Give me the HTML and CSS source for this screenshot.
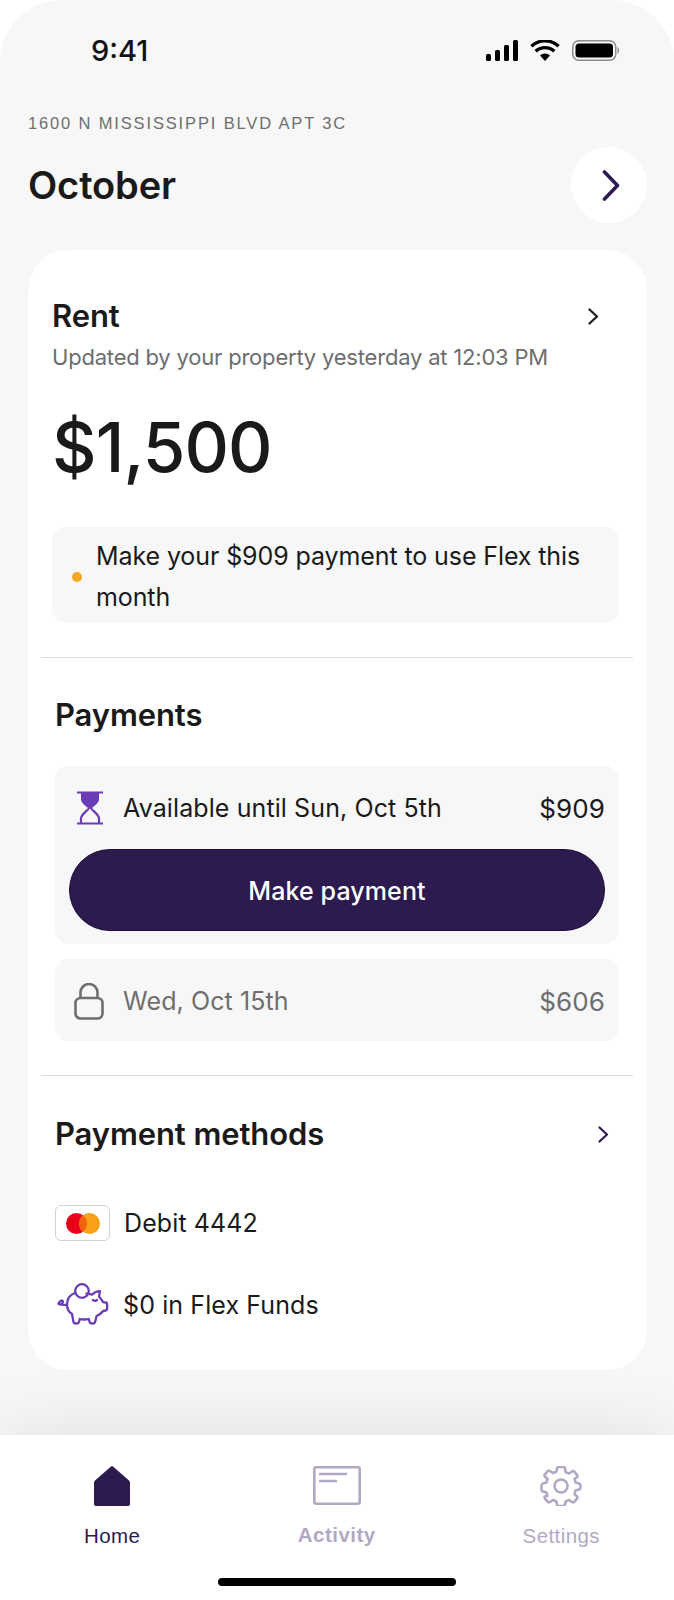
FILE: index.html
```html
<!DOCTYPE html>
<html lang="en">
<head>
<meta charset="utf-8">
<title>Home</title>
<link rel="stylesheet" href="styles.css">
</head>
<body>
<div class="phone">
  <div class="status">
    <span class="time">9:41</span>
    <div class="status-icons">
      <svg width="32" height="21" viewBox="0 0 32 21"><rect x="0" y="14" width="5" height="7" rx="1.5"/><rect x="9" y="10" width="5" height="11" rx="1.5"/><rect x="18" y="5" width="5" height="16" rx="1.5"/><rect x="27" y="0" width="5" height="21" rx="1.5"/></svg>
      <svg width="30" height="21" viewBox="0 0 30 21"><path d="M15 21l-5-5.600a7.400 7.400 0 0 1 10 0z"/><path d="M5.700 11.300a13.600 13.600 0 0 1 18.600 0" fill="none" stroke="#000" stroke-width="3.400"/><path d="M1.400 6.200a20 20 0 0 1 27.200 0" fill="none" stroke="#000" stroke-width="3.400"/></svg>
      <svg width="47" height="21" viewBox="0 0 47 21"><rect x=".75" y=".75" width="43" height="19.500" rx="6" fill="none" stroke="#8d8d8d" stroke-width="1.500"/><rect x="3.500" y="3.500" width="37.500" height="14" rx="3.500"/><path d="M45.500 7v7c1-.4 1.500-2 1.500-3.500s-.5-3.100-1.500-3.500z" fill="#8d8d8d"/></svg>
    </div>
  </div>

  <main class="content">
    <p class="address">1600 N MISSISSIPPI BLVD APT 3C</p>
    <div class="month-row">
      <h1 class="month">October</h1>
      <button class="round-btn" aria-label="Next month">
        <svg width="18" height="31" viewBox="0 0 18 31"><path d="M2.500 2l13 13.500-13 13.500" fill="none" stroke="#2d1a4f" stroke-width="3.600" stroke-linecap="round" stroke-linejoin="round"/></svg>
      </button>
    </div>

    <section class="card">
      <div class="rent">
        <div class="title-row">
          <h2 class="rent-title">Rent</h2>
          <svg class="chev-rent" width="11" height="17" viewBox="0 0 11 17"><path d="M1.500 1.500l7.500 7-7.500 7" fill="none" stroke="#1a1a1a" stroke-width="2.200" stroke-linecap="round" stroke-linejoin="round"/></svg>
        </div>
        <p class="updated">Updated by your property yesterday at 12:03 PM</p>
        <p class="amount">$1,500</p>
        <div class="note">
          <span class="dot"></span>
          <p class="note-text">Make your $909 payment to use Flex this month</p>
        </div>
      </div>

      <hr class="rule">

      <div class="payments">
        <h2 class="section-title">Payments</h2>
        <div class="pay-box active">
          <div class="pay-row">
            <svg class="pay-icon" width="28" height="34" viewBox="0 0 28 34"><g fill="none" stroke="#6a3cb5" stroke-width="2.200"><path d="M1 1.500h26M1 32.500h26"/><path d="M5 32v-4.500c0-3.500 4-6 7.500-9.500M23 32v-4.500c0-3.500-4-6-7.500-9.500"/></g><path d="M5 2h18v6.500c0 3-4 6-7 8.500v1h-4v-1c-3-2.500-7-5.500-7-8.500z" fill="#6a3cb5"/></svg>
            <span class="pay-label">Available until Sun, Oct 5th</span>
            <span class="pay-amt">$909</span>
          </div>
          <button class="pay-btn">Make payment</button>
        </div>
        <div class="pay-box locked">
          <div class="pay-row">
            <svg class="pay-icon" width="30" height="37" viewBox="0 0 30 37"><g fill="none" stroke="#6e6e6e" stroke-width="2.600"><rect x="1.500" y="15" width="27" height="20.500" rx="5"/><path d="M6.500 15V9.500a8.500 8.500 0 0 1 17 0V15"/></g></svg>
            <span class="pay-label">Wed, Oct 15th</span>
            <span class="pay-amt">$606</span>
          </div>
        </div>
      </div>

      <hr class="rule">

      <div class="methods">
        <div class="title-row">
          <h2 class="section-title">Payment methods</h2>
          <svg class="chev-methods" width="11" height="17" viewBox="0 0 11 17"><path d="M1.500 1.500l7.500 7-7.500 7" fill="none" stroke="#2d1a4f" stroke-width="2.200" stroke-linecap="round" stroke-linejoin="round"/></svg>
        </div>
        <div class="method">
          <span class="card-chip">
            <svg width="34" height="21" viewBox="0 0 34 21"><circle cx="10.500" cy="10.500" r="10.500" fill="#eb001b"/><circle cx="23.500" cy="10.500" r="10.500" fill="#f9a01b"/><path d="M17 2.300a10.500 10.500 0 0 1 0 16.400 10.500 10.500 0 0 1 0-16.400z" fill="#f4620f"/></svg>
          </span>
          <span class="method-label">Debit 4442</span>
        </div>
        <div class="method">
          <svg class="pig" width="52" height="44" viewBox="0 0 52 44"><g fill="none" stroke="#6a3cb5" stroke-width="2.300" stroke-linecap="round" stroke-linejoin="round"><circle cx="25" cy="8" r="6.800"/><path d="M18 10c-6 2-8 7-8 12 0 4 2 7 5 9l1.500 8c.3 2 5 2 5.500 0l.8-3c3 .7 6 .7 9 0l.8 3c.5 2 5 2 5.500 0l1.500-6c3-1.200 5-3 6.500-5l2.500-.5c1-.2 1.500-1 1.500-2v-4c0-1-.5-2-1.500-2l-2.500-.3c-1-2-2.500-4-4-5.500l.8-5.500c-3 0-6 1.500-8 3.500-2-.6-3.500-1-5.500-1"/><path d="M36 17c1 1.200 3 1.200 4 0"/><path d="M10 22c-3 0-9-.5-8.500-1.500.5-1.500 2.500-3 3.500-3 1.500.5 1 3-1 3.800"/></g></svg>
          <span class="method-label">$0 in Flex Funds</span>
        </div>
      </div>
    </section>
  </main>

  <nav class="tabbar">
    <a class="tab tab-home">
      <svg width="36" height="40" viewBox="0 0 36 40"><path d="M17 .5L1 14.500c-.6.500-1 1.200-1 2V38c0 1.200.8 2 2 2h32c1.200 0 2-.8 2-2V16.500c0-.8-.4-1.500-1-2L19 .5c-.6-.5-1.400-.5-2 0z" fill="#2d1a4f"/></svg>
      <span class="tab-label">Home</span>
    </a>
    <a class="tab tab-activity">
      <svg width="48" height="39" viewBox="0 0 48 39"><g fill="none" stroke="#b2a8c4" stroke-width="2.600"><rect x="1.300" y="1.300" width="45.400" height="36.400" rx="2"/><path d="M6 8h28M6 15h18"/></g></svg>
      <span class="tab-label">Activity</span>
    </a>
    <a class="tab tab-settings">
      <svg width="42" height="40" viewBox="0 0 42 40"><g fill="none" stroke="#b2a8c4" stroke-width="2.600" stroke-linejoin="round"><circle cx="21" cy="20" r="6.500"/><path d="M17 2.500c0-1 1-1.500 2-1.500h4c1 0 2 .5 2 1.500l.5 3.500 3.500 1.500 3-2c.8-.5 1.800-.4 2.500.3l2.500 3c.6.8.5 1.800-.2 2.500L34.500 13l1 3.500 3.500 1c1 .3 1.500 1 1.500 2v2c0 1-.5 1.700-1.500 2l-3.500 1-1 3.500 2.300 2.200c.7.700.8 1.700.2 2.500l-2.500 3c-.7.700-1.700.8-2.500.3l-3-2-3.500 1.500-.5 3c0 1-1 1.500-2 1.500h-4c-1 0-2-.5-2-1.500l-.5-3-3.500-1.500-3 2c-.8.500-1.800.4-2.500-.3l-2.500-3c-.6-.8-.5-1.800.2-2.500L7.500 30l-1-3.500-3.500-1c-1-.3-1.500-1-1.500-2v-4c0-1 .5-1.700 1.500-2l3.500-1 1-3.500-2.300-2.200c-.7-.7-.8-1.700-.2-2.500l2.500-3c.7-.7 1.700-.8 2.500-.3l3 2 3.500-1.500z"/></g></svg>
      <span class="tab-label">Settings</span>
    </a>
    <span class="home-bar"></span>
  </nav>
</div>
</body>
</html>
```
FILE: styles.css
```css
* { box-sizing: border-box; }
html, body { margin: 0; padding: 0; background: #fff; }
body { font-family: "Inter", "Liberation Sans", sans-serif; color: #1a1a1a; }
h1, h2, p { margin: 0; }

.phone {
  width: 674px;
  height: 1600px;
  background: #f7f7f7;
  border-radius: 62px 62px 0 0;
  display: flex;
  flex-direction: column;
  overflow: hidden;
}

.status {
  margin-top: 40px;
  padding: 0 55px 0 91px;
  display: flex;
  justify-content: space-between;
  align-items: flex-start;
  flex: none;
  height: 21px;
}
.time {
  font: 500 29px/21px "Inter", sans-serif;
  color: #111;
}
.status-icons { display: flex; gap: 12px; }

.content { flex: 1; padding: 55px 27px 0 28px; }
.address {
  font: 400 16.500px/14px "Liberation Sans", sans-serif;
  letter-spacing: 1.850px;
  color: #6e6e6e;
}
.month-row {
  margin-top: 17px;
  display: flex;
  justify-content: space-between;
  align-items: center;
}
.month { font-size: 38px; font-weight: 600; letter-spacing: -.1px; line-height: 76px; }
.round-btn {
  width: 76px;
  height: 76px;
  border: 0;
  border-radius: 50%;
  background: #fff;
  display: flex;
  align-items: center;
  justify-content: center;
  padding: 0 0 0 4px;
}

.card {
  margin-top: 27px;
  height: 1120px;
  background: #fff;
  border-radius: 40px;
  padding: 48px 14px 0 13px;
}
.rent { padding: 0 14px 0 11px; }
.title-row { display: flex; justify-content: space-between; align-items: center; }
.rent-title { font-size: 31px; font-weight: 600; line-height: 36px; letter-spacing: -.1px; }
.chev-rent { margin-right: 20px; }
.updated { margin-top: 8px; font-size: 22px; line-height: 30px; color: #6e6e6e; letter-spacing: -.2px; }
.amount { margin-top: 35px; font-size: 69px; line-height: 80px; font-weight: 500; letter-spacing: -.9px; }
.note {
  margin-top: 40px;
  min-height: 96px;
  background: #f7f7f7;
  border-radius: 14px;
  display: flex;
  align-items: center;
  padding: 3px 19px 0 20px;
  gap: 14px;
}
.dot { width: 10px; height: 10px; border-radius: 50%; background: #f5a623; flex: none; }
.note-text { font-size: 25px; line-height: 41px; letter-spacing: -.1px; }

.rule { margin: 34px 0 0; border: 0; border-top: 1.500px solid #dedede; }

.payments { padding: 0 14px 0 14px; margin-top: 39px; }
.section-title { font-size: 31px; line-height: 36px; font-weight: 600; letter-spacing: -.1px; }
.pay-box {
  background: #f7f7f7;
  border-radius: 14px;
  padding: 0 14px;
}
.active { margin-top: 33px; height: 178px; padding-top: 24px; }
.locked { margin-top: 15px; height: 82px; padding-top: 24px; }
.pay-row { display: flex; align-items: center; height: 36px; color: #1a1a1a; font-size: 25px; letter-spacing: .1px; }
.locked .pay-row { color: #6e6e6e; }
.pay-icon { margin-left: 7px; flex: none; }
.locked .pay-icon { margin-left: 5px; }
.pay-label { margin-left: 19px; flex: 1; }
.pay-amt { font-size: 26px; }
.pay-btn {
  margin-top: 23px;
  width: 100%;
  height: 82px;
  border: 1px solid #1c0d3d;
  border-radius: 41px;
  background: #2d1a4f;
  color: #fff;
  font: 500 25px "Inter", sans-serif;
  letter-spacing: .1px;
  padding: 2px 0 0;
}

.methods { padding: 0 14px; margin-top: 40px; }
.chev-methods { margin-right: 10px; }
.method { display: flex; align-items: center; font-size: 25px; letter-spacing: .1px; }
.method:nth-of-type(2) { margin-top: 53px; height: 36px; }
.method + .method { margin-top: 42px; height: 44px; }
.card-chip {
  width: 55px;
  height: 36px;
  border: 1.500px solid #d2d0da;
  border-radius: 6px;
  display: flex;
  align-items: center;
  justify-content: center;
  flex: none;
}
.method-label { margin-left: 14px; }
.pig { margin-left: 2px; flex: none; }

.tabbar {
  position: relative;
  flex: none;
  height: 165px;
  background: #fff;
  display: grid;
  grid-template-columns: repeat(3, 224.500px);
  align-items: start;
  padding-top: 31px;
  box-shadow: 0 0 70px rgba(0, 0, 0, .1);
}
.tab { display: flex; flex-direction: column; align-items: center; }
.tab-label { margin-top: 19px; font: 400 20.500px/22px "Liberation Sans", sans-serif; letter-spacing: .4px; color: #b2a8c4; }
.tab-home .tab-label { color: #2d1a4f; }
.tab-activity .tab-label { font-weight: 700; letter-spacing: .5px; }
.home-bar {
  position: absolute;
  left: 218px;
  top: 143px;
  width: 238px;
  height: 8px;
  border-radius: 4px;
  background: #000;
}
```
